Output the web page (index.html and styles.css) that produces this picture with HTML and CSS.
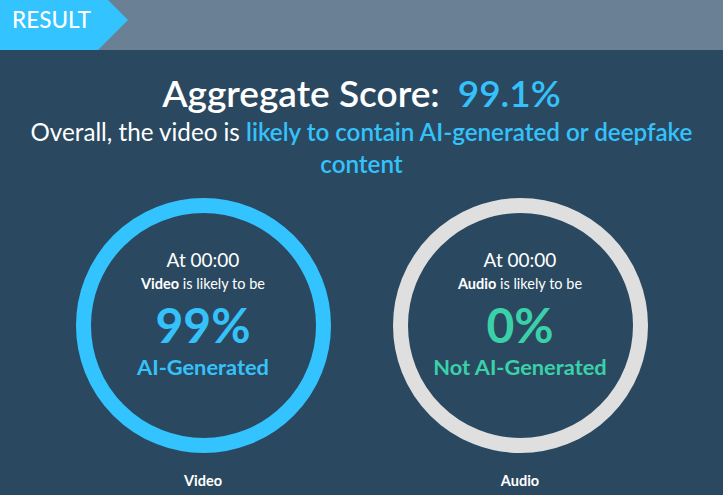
FILE: index.html
```html
<!DOCTYPE html>
<html>
<head>
<meta charset="utf-8">
<link rel="stylesheet" href="styles.css">
</head>
<body>
<div class="page">
  <header class="bar">
    <div class="tab">RESULT</div>
  </header>
  <section class="summary">
    <h1 class="score">Aggregate Score:<span class="hl score-val">99.1%</span></h1>
    <p class="verdict">Overall, the video is <span class="hl">likely to contain AI-generated or deepfake content</span></p>
  </section>
  <section class="gauges">
    <div class="gauge">
      <div class="ring ring-blue">
        <div class="at">At 00:00</div>
        <div class="likely"><b>Video</b> is likely to be</div>
        <div class="pct blue">99%</div>
        <div class="kind blue">AI-Generated</div>
      </div>
      <div class="label">Video</div>
    </div>
    <div class="gauge">
      <div class="ring ring-gray">
        <div class="at">At 00:00</div>
        <div class="likely"><b>Audio</b> is likely to be</div>
        <div class="pct green">0%</div>
        <div class="kind green">Not AI-Generated</div>
      </div>
      <div class="label">Audio</div>
    </div>
  </section>
</div>
</body>
</html>
```
FILE: styles.css
```css
html, body {
  margin: 0;
  padding: 0;
  background: #2a4961;
}
.page {
  width: 723px;
  height: 495px;
  overflow: hidden;
  background: #2a4961;
  color: #ffffff;
  font-family: "Lato", "Open Sans", sans-serif;
}
.bar {
  height: 50px;
  background: #6a8095;
  display: flex;
}
.tab {
  width: 128px;
  height: 50px;
  background: #33c3ff;
  clip-path: polygon(0 0, 108px 0, 128px 20px, 98px 50px, 0 50px);
  color: #fff;
  font-size: 22.5px;
  font-weight: 500;
  line-height: 40px;
  padding-left: 12px;
  box-sizing: border-box;
}
.summary {
  text-align: center;
  padding-top: 19px;
}
.score {
  margin: 0;
  font-size: 37px;
  font-weight: 600;
  line-height: 47px;
}
.score-val {
  margin-left: 18px;
}
.hl {
  color: #35c2fb;
}
.verdict {
  margin: 0 auto;
  width: 710px;
  font-size: 24.2px;
  line-height: 32px;
  font-weight: 400;
}
.verdict .hl {
  font-weight: 600;
}
.gauges {
  display: flex;
  justify-content: center;
  gap: 62px;
  padding-top: 18px;
}
.gauge {
  display: flex;
  flex-direction: column;
  align-items: center;
}
.ring {
  width: 255px;
  height: 255px;
  border-radius: 50%;
  border: 15px solid #33c3ff;
  box-sizing: border-box;
  display: flex;
  flex-direction: column;
  align-items: center;
  padding-top: 35px;
}
.ring-gray {
  border-color: #dfdfdf;
}
.at {
  font-size: 19px;
  line-height: 24px;
}
.likely {
  font-size: 14.5px;
  line-height: 24px;
}
.likely b {
  font-weight: 700;
}
.pct {
  font-size: 48px;
  font-weight: 700;
  line-height: 56px;
  margin-top: 1px;
}
.kind {
  font-size: 21.8px;
  font-weight: 700;
  line-height: 28px;
  margin-top: 0;
}
.blue { color: #35c2fb; }
.green { color: #3bd1a8; }
.label {
  margin-top: 19px;
  font-weight: 700;
  font-size: 14.5px;
  line-height: 18px;
}
```
